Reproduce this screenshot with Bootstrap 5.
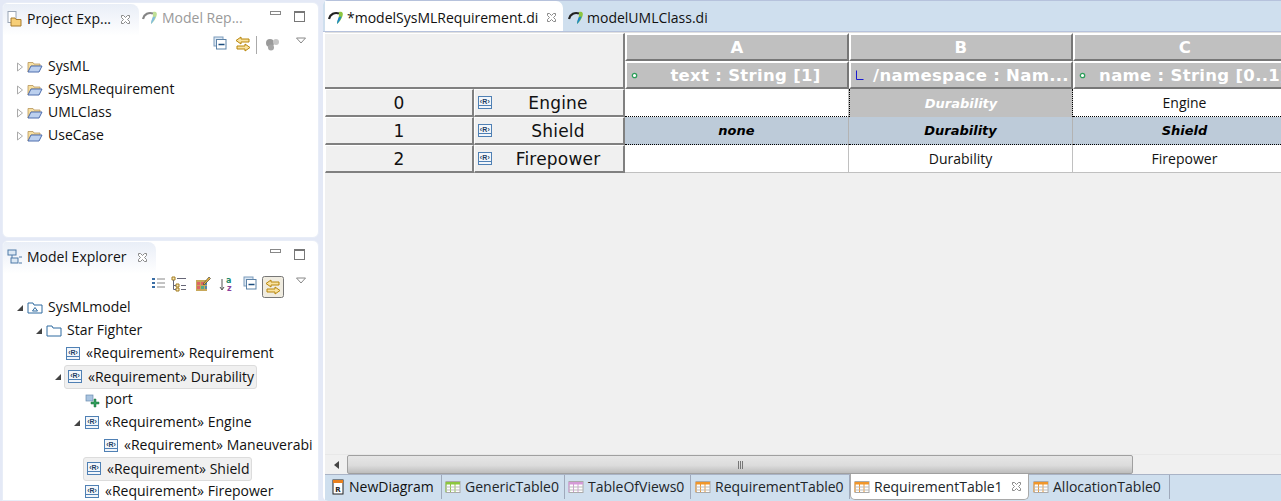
<!DOCTYPE html>
<html lang="en"><head><meta charset="utf-8"><title>Papyrus</title>
<link href="https://cdn.jsdelivr.net/npm/bootstrap@5.3.0/dist/css/bootstrap.min.css" rel="stylesheet">
<style>
html,body{height:501px;overflow:hidden}
body{background:#e4e9f6;font-family:"Open Sans","Noto Sans",sans-serif;font-size:14px;color:#111;line-height:1}
.app{height:501px;width:1281px}
.leftcol{width:323px;flex:none;padding:2px 4px 0 2px;gap:2px}
.panel{background:#fff;border-radius:6px 6px 0 0;overflow:hidden;border:1px solid #e8edf7}
.panel1{height:237px;border-radius:6px}
.panel2{height:262px}
.tabhead{height:33px;flex:none;padding-top:1px}
.vtab{height:32px;padding:0 8px 2px 4px;gap:4px;white-space:nowrap;background:linear-gradient(#e9eef7,#fff);border-radius:0 8px 0 0;color:#111}
.vtab1{width:136px}
.vtab2{width:153px}
.vtabgrey{color:#9a9a9a;padding:0 0 2px 3px;height:30px;gap:4px;white-space:nowrap}
.spacer{flex:1}
.winbtns{gap:13px;padding:7px 13px 0 0}
.min{width:11px;height:4px;border:1px solid #888;background:#fff}
.max{width:11px;height:11px;border:1px solid #777;border-top-width:2px;background:#fff}
.tools{flex:none;padding-right:10px}
.tools svg{display:block}
.toolsa{height:17px}
.toolsb{height:20px;padding-top:2px}
.sep{width:1px;height:18px;background:#aaa;margin:0 5px}
.ga{margin-left:8px}.gb{margin-left:6px}.gc{margin-left:8px}.gd{margin-left:5px}.ge{margin-left:15px}.gf{margin-left:11px}.gh{margin-left:3px}
.tree{padding-top:2px}
.trow{height:23px;white-space:nowrap}
.tw{width:14px;flex:none;display:flex;justify-content:center}
.lbl{padding:3px 2px 4px 3px}
.sel{border:1px solid #dcdcdc;border-radius:3px;background:#f0f0f0;padding:3px 2px 3px 1px;margin-left:-1px}
.sel .ico{margin-left:1px}
.sel .seltxt{padding-left:3px}
.ind1{padding-left:10px}.ind2{padding-left:29px}.ind3{padding-left:48px}.ind4{padding-left:67px}.ind5{padding-left:86px}
.ico{flex:none;display:block;margin-right:2px}
.tabsbar{height:32px;flex:none;background:#cfdfee;border-top:1px solid #b6c2dc;border-bottom:1px solid #b6c2dc;padding-left:2px}
.edtab{height:30px;gap:3px;padding:3px 6px 0 3px;white-space:nowrap}
.edtab.on{background:#fff;border-radius:0 7px 0 0;width:238px}
.edtab.off{padding-left:5px}
.rightcol{flex:1;min-width:0;overflow:hidden;background:#fff;border-radius:5px 0 0 5px}
.gridwrap{flex:1;background:#f0f0f0;overflow:hidden;margin-left:2px;border-top:1px solid #e0e0e0;min-height:0;display:flex;flex-direction:column}
.tblgrid{display:grid;grid-template-columns:149px 151px 224px 224px 224px;grid-template-rows:28px 28px 28px 28px 28px;width:972px;flex:none}
.corner{grid-column:1/3;grid-row:1/3;background:#f0f0f0;border-bottom:2px solid #808080;border-right:2px solid #808080;border-top:1px solid #fff}
.hd{background:#c0c0c0;color:#fff;font:700 16.5px "DejaVu Sans",sans-serif;border:1px solid #fff;border-top-width:2px;border-left-width:2px;border-right:2px solid #777;border-bottom:2px solid #777;overflow:hidden;white-space:nowrap;letter-spacing:.3px}
.attr{justify-content:flex-start;padding-left:4px}
.attr span{flex:1;text-align:center;padding-left:6px}
.rh{background:#f0f0f0;font:17px "DejaVu Sans",sans-serif;letter-spacing:.2px;color:#111;border-right:2px solid #808080;border-bottom:2px solid #808080;border-left:1px solid #fff;border-top:1px solid #fff}
.rn{padding-left:2px;justify-content:flex-start}
.rn span{flex:1;text-align:center}
.c{background:#fff;font:14px "Open Sans",sans-serif;border-right:1px solid #c0c0c0;border-bottom:1px solid #c0c0c0;color:#111}
.ds{border-bottom:1px dotted #000}
.hl{background:#bdcbd9;font:italic 700 13px "DejaVu Sans",sans-serif;color:#000;border-right:1px solid #b3b3b3}
.sl{background:#c0c0c0;color:#fff;font:italic 700 13px "DejaVu Sans",sans-serif;border-left:1px dotted #000;border-right:1px dotted #000}
.fill{flex:1;min-height:0}
.sbar{height:20px;flex:none;background:#f0f0f0;border-top:1px solid #e8e8e8}
.sbtn{width:22px;flex:none;justify-content:center}
.thumb{width:786px;height:19px;border:1px solid #a0a0a0;border-radius:2px;background:linear-gradient(#e6e6e6,#dcdcdc 55%,#bdbdbd);gap:1px}
.thumb i{display:block;width:1px;height:8px;background:#777}
.btabs{height:27px;flex:none;background:#cfdfee;border-top:1px solid #a9b3c6;margin-left:2px}
.btab{height:24px;white-space:nowrap;padding:0 0 0 3px;gap:4px;border-right:1px solid #9fa9bb;flex:none}
.btab.on{background:#fff;margin-top:-1px;height:26px;border:1px solid #a9a9a9;border-top:none;border-radius:0 0 5px 5px}
.wa{width:117px;padding-left:6px}.wb{width:123px}.wc{width:126px}.wd{width:159px;padding-left:4px}.we{width:179px}.wf{width:141px;padding-left:4px}
.grn{color:#8cc63f}.pur{color:#d49ad6}.org{color:#f0962a}
</style></head>
<body>
<svg width="0" height="0" class="d-none"><defs>
<symbol id="folder" viewBox="0 0 16 16"><path d="M1 3.500h5l1 1.500h6v2H4L1 13z" fill="#f7dfa0" stroke="#b8965a" stroke-width=".8"/><path d="M1 13l3-6h11l-3 6z" fill="#bcd0ee" stroke="#4e6eae"/></symbol>
<symbol id="req" viewBox="0 0 16 16"><rect x="1.500" y="1.500" width="13" height="12" fill="#f2f6fb" stroke="#4f80b4"/><path d="M1.500 10.500h13" stroke="#4f80b4"/><text x="8" y="8.500" font-family="Liberation Sans" font-size="7" font-weight="700" text-anchor="middle" fill="#1f3f66">‹R›</text></symbol>
<symbol id="close" viewBox="0 0 11 11"><path d="M1.500 1.500h2l2 2 2-2h2v2l-2 2 2 2v2h-2l-2-2-2 2h-2v-2l2-2-2-2z" fill="#fff" stroke="#8a8a8a"/></symbol>
<symbol id="tgl" viewBox="0 0 8 10"><path d="M1.500 1l5 4-5 4z" fill="#fff" stroke="#aaa"/></symbol>
<symbol id="open" viewBox="0 0 8 8"><path d="M7 1v6H1z" fill="#444"/></symbol>
<symbol id="pap" viewBox="0 0 16 16"><path d="M1 9C2 4 7 2 11 3.500" fill="none" stroke="#222" stroke-width="2.200"/><path d="M11 2c3.500-1 4.500 1 3.500 4-1 3-3 6-5.500 8 0-3 2.500-6 2-12z" fill="#8cc63f"/><path d="M9 14c0-3 1-5 2-7l2.500-.5C12.500 9.500 11 12.500 9 14z" fill="#1b87c9"/></symbol>
<symbol id="sync" viewBox="0 0 16 16"><path d="M6 1L1 4.500 6 8V6h8V3H6zM10 8l5 3.500L10 15v-2H2v-3h8z" fill="#f9e2a0" stroke="#b8860b"/></symbol>
<symbol id="coll" viewBox="0 0 14 14"><rect x="1" y="1" width="9" height="9" fill="#dbe7f3" stroke="#7c9cbc"/><rect x="3.500" y="3.500" width="9.500" height="9.500" fill="#fff" stroke="#5d83a8"/><path d="M5.500 8.500h6" stroke="#1c4d7e" stroke-width="1.500"/></symbol>
<symbol id="tbl" viewBox="0 0 16 16"><rect x="1" y="2.500" width="14" height="11" fill="#fff" stroke="#aaa"/><path d="M1 3h14v2.500H1z" fill="currentColor"/><path d="M1 3v10M5.500 3v10M10 3v10" stroke="currentColor"/><path d="M1 8h14M1 11h14" stroke="#bbb"/></symbol>
</defs></svg>
<div class="app d-flex">
 <div class="leftcol d-flex flex-column">
  <div class="panel panel1 d-flex flex-column">
   <div class="tabhead d-flex">
    <div class="vtab vtab1 d-flex align-items-center">
     <svg width="16" height="16" viewBox="0 0 16 16"><rect x="1" y="0.500" width="8" height="11" fill="#fff" stroke="#9aa5b5"/><path d="M4 7h4l1 1.500h5V15H4z" fill="#f7cf78" stroke="#a87c2e"/></svg>
     <span>Project Exp...</span><span class="spacer"></span><svg width="11" height="11"><use href="#close"/></svg>
    </div>
    <div class="vtabgrey d-flex align-items-center"><svg width="16" height="16" opacity=".55"><use href="#pap"/></svg><span>Model Rep...</span></div>
    <div class="spacer"></div>
    <div class="winbtns d-flex"><div class="min"></div><div class="max"></div></div>
   </div>
   <div class="tools toolsa d-flex justify-content-end align-items-start">
    <svg width="14" height="14"><use href="#coll"/></svg><svg class="ga" width="16" height="16"><use href="#sync"/></svg><div class="sep"></div>
    <svg class="gh" width="15" height="15" viewBox="0 0 15 15"><circle cx="5" cy="7" r="4" fill="#9a9a9a"/><circle cx="11" cy="6" r="3" fill="#c6c6c6"/><circle cx="6" cy="11.500" r="3" fill="#a5a5a5"/></svg>
    <svg class="ge" width="13" height="10" viewBox="0 0 13 10"><path d="M1.500 2h9l-4.500 5z" fill="#fff" stroke="#888"/></svg>
   </div>
   <div class="tree">
    <div class="trow d-flex align-items-center ind1"><span class="tw"><svg width="8" height="10"><use href="#tgl"/></svg></span><svg class="ico" width="16" height="16"><use href="#folder"/></svg><span class="lbl">SysML</span></div>
    <div class="trow d-flex align-items-center ind1"><span class="tw"><svg width="8" height="10"><use href="#tgl"/></svg></span><svg class="ico" width="16" height="16"><use href="#folder"/></svg><span class="lbl">SysMLRequirement</span></div>
    <div class="trow d-flex align-items-center ind1"><span class="tw"><svg width="8" height="10"><use href="#tgl"/></svg></span><svg class="ico" width="16" height="16"><use href="#folder"/></svg><span class="lbl">UMLClass</span></div>
    <div class="trow d-flex align-items-center ind1"><span class="tw"><svg width="8" height="10"><use href="#tgl"/></svg></span><svg class="ico" width="16" height="16"><use href="#folder"/></svg><span class="lbl">UseCase</span></div>
   </div>
  </div>
  <div class="panel panel2 d-flex flex-column">
   <div class="tabhead d-flex">
    <div class="vtab vtab2 d-flex align-items-center">
     <svg width="16" height="16" viewBox="0 0 16 16"><rect x="1" y="1" width="8" height="5" fill="#dce8f4" stroke="#4f7ba8"/><rect x="4" y="9" width="7" height="5" fill="#dce8f4" stroke="#4f7ba8"/><path d="M5 6v3M12 8h3M12 14h3" stroke="#4f7ba8"/></svg>
     <span>Model Explorer</span><span class="spacer"></span><svg width="11" height="11"><use href="#close"/></svg>
    </div>
    <div class="spacer"></div>
    <div class="winbtns d-flex"><div class="min"></div><div class="max"></div></div>
   </div>
   <div class="tools toolsb d-flex justify-content-end align-items-start">
    <svg width="14" height="14" viewBox="0 0 14 14"><path d="M1 2h3v2H1zM1 6h3v2H1zM1 10h3v2H1z" fill="#3a6ea5"/><path d="M6 3h8M6 7h8M6 11h8" stroke="#888"/></svg>
    <svg class="gb" width="16" height="16" viewBox="0 0 16 16"><path d="M1 1h3v3H1zM5 8h3v3H5zM5 12h3v3H5z" fill="#fbe9b5" stroke="#a07a20"/><path d="M2.500 4v9.500H5M2.500 9.500H5M6 2.500h9M10 9.500h5M10 13.500h5" fill="none" stroke="#667"/></svg>
    <svg class="gc" width="16" height="16" viewBox="0 0 16 16"><path d="M1 4h11v11H1z" fill="#c8a85a"/><path d="M2 6h3v3H2zM6 6h3v3H6zM2 10h3v3H2z" fill="#d66"/><path d="M6 10h3v3H6z" fill="#5a8"/><path d="M10 6h2v3h-2zM10 10h2v3h-2z" fill="#58a"/><path d="M8 8l6-7 1.500 1.500L9 9z" fill="#e3b23c" stroke="#333" stroke-width=".6"/></svg>
    <svg class="gc" width="16" height="16" viewBox="0 0 16 16"><path d="M3 3v10M1 11l2 3 2-3" fill="none" stroke="#555"/><text x="7" y="7" font-family="DejaVu Sans" font-size="8" font-weight="700" fill="#1c8a6a">a</text><text x="8" y="15" font-family="DejaVu Sans" font-size="8" font-weight="700" fill="#8a3f9e">z</text></svg>
    <svg class="ga" width="14" height="14"><use href="#coll"/></svg>
    <svg class="gd" width="22" height="22" viewBox="0 0 22 22"><rect x=".5" y=".5" width="21" height="21" rx="2" fill="#f0ece0" stroke="#777"/><use href="#sync" x="3" y="3" width="16" height="16"/></svg>
    <svg class="gf" width="13" height="10" viewBox="0 0 13 10"><path d="M1.500 2h9l-4.500 5z" fill="#fff" stroke="#888"/></svg>
   </div>
   <div class="tree">
    <div class="trow d-flex align-items-center ind1"><span class="tw"><svg width="8" height="8"><use href="#open"/></svg></span><svg class="ico" width="16" height="16" viewBox="0 0 16 16"><path d="M1 3h5l1 2h8v8H1z" fill="#fff" stroke="#2f6ba0"/><path d="M5.500 11L8 7.500l2.500 3.500z" fill="none" stroke="#2f6ba0"/></svg><span class="lbl">SysMLmodel</span></div>
    <div class="trow d-flex align-items-center ind2"><span class="tw"><svg width="8" height="8"><use href="#open"/></svg></span><svg class="ico" width="16" height="16" viewBox="0 0 16 16"><path d="M1 3h5l1 2h8v8H1z" fill="#fff" stroke="#2f6ba0"/></svg><span class="lbl">Star Fighter</span></div>
    <div class="trow d-flex align-items-center ind3"><span class="tw"></span><svg class="ico" width="16" height="16"><use href="#req"/></svg><span class="lbl">«Requirement» Requirement</span></div>
    <div class="trow d-flex align-items-center ind3"><span class="tw"><svg width="8" height="8"><use href="#open"/></svg></span><span class="d-flex align-items-center sel"><svg class="ico" width="16" height="16"><use href="#req"/></svg><span class="seltxt">«Requirement» Durability</span></span></div>
    <div class="trow d-flex align-items-center ind4"><span class="tw"></span><svg class="ico" width="16" height="16" viewBox="0 0 16 16"><rect x="2" y="3" width="7" height="6" fill="#a9c4e0" stroke="#6c8db0" stroke-width=".7"/><path d="M10 7h2v3h3v2h-3v3h-2v-3H7v-2h3z" fill="#2f9e5b" stroke="#1e6e3e" stroke-width=".5"/></svg><span class="lbl">port</span></div>
    <div class="trow d-flex align-items-center ind4"><span class="tw"><svg width="8" height="8"><use href="#open"/></svg></span><svg class="ico" width="16" height="16"><use href="#req"/></svg><span class="lbl">«Requirement» Engine</span></div>
    <div class="trow d-flex align-items-center ind5"><span class="tw"></span><svg class="ico" width="16" height="16"><use href="#req"/></svg><span class="lbl">«Requirement» Maneuverabi</span></div>
    <div class="trow d-flex align-items-center ind4"><span class="tw"></span><span class="d-flex align-items-center sel"><svg class="ico" width="16" height="16"><use href="#req"/></svg><span class="seltxt">«Requirement» Shield</span></span></div>
    <div class="trow d-flex align-items-center ind4"><span class="tw"></span><svg class="ico" width="16" height="16"><use href="#req"/></svg><span class="lbl">«Requirement» Firepower</span></div>
   </div>
  </div>
 </div>
 <div class="rightcol d-flex flex-column">
  <div class="tabsbar d-flex">
   <div class="edtab on d-flex align-items-center"><svg width="16" height="16"><use href="#pap"/></svg><span>*modelSysMLRequirement.di</span><span class="spacer"></span><svg width="11" height="11"><use href="#close"/></svg></div>
   <div class="edtab off d-flex align-items-center"><svg width="16" height="16"><use href="#pap"/></svg><span>modelUMLClass.di</span></div>
  </div>
  <div class="gridwrap">
   <div class="tblgrid">
    <div class="corner"></div>
    <div class="hd d-flex align-items-center justify-content-center">A</div>
    <div class="hd d-flex align-items-center justify-content-center">B</div>
    <div class="hd d-flex align-items-center justify-content-center">C</div>
    <div class="hd attr d-flex align-items-center"><svg width="7" height="7" viewBox="0 0 7 7"><circle cx="3.500" cy="3.500" r="2.200" fill="#fff" stroke="#2e9e5b" stroke-width="1.300"/></svg><span>text : String [1]</span></div>
    <div class="hd attr d-flex align-items-center"><svg width="10" height="11" viewBox="0 0 10 11"><path d="M1.500 .5v9h7" fill="none" stroke="#1a1ad0"/></svg><span>/namespace : Nam...</span></div>
    <div class="hd attr d-flex align-items-center"><svg width="7" height="7" viewBox="0 0 7 7"><circle cx="3.500" cy="3.500" r="2.200" fill="#fff" stroke="#2e9e5b" stroke-width="1.300"/></svg><span>name : String [0..1]</span></div>

    <div class="rh d-flex align-items-center justify-content-center">0</div>
    <div class="rh rn d-flex align-items-center"><svg width="16" height="16"><use href="#req"/></svg><span>Engine</span></div>
    <div class="c ds d-flex align-items-center justify-content-center"></div>
    <div class="sl d-flex align-items-center justify-content-center">Durability</div>
    <div class="c ds d-flex align-items-center justify-content-center">Engine</div>

    <div class="rh d-flex align-items-center justify-content-center">1</div>
    <div class="rh rn d-flex align-items-center"><svg width="16" height="16"><use href="#req"/></svg><span>Shield</span></div>
    <div class="c hl ds d-flex align-items-center justify-content-center">none</div>
    <div class="c hl ds d-flex align-items-center justify-content-center">Durability</div>
    <div class="c hl ds d-flex align-items-center justify-content-center">Shield</div>

    <div class="rh d-flex align-items-center justify-content-center">2</div>
    <div class="rh rn d-flex align-items-center"><svg width="16" height="16"><use href="#req"/></svg><span>Firepower</span></div>
    <div class="c d-flex align-items-center justify-content-center"></div>
    <div class="c d-flex align-items-center justify-content-center">Durability</div>
    <div class="c d-flex align-items-center justify-content-center">Firepower</div>
   </div>
   <div class="fill"></div>
   <div class="sbar d-flex align-items-center">
    <div class="sbtn d-flex"><svg width="7" height="10" viewBox="0 0 7 10"><path d="M6 1v8L1 5z" fill="#444"/></svg></div>
    <div class="thumb d-flex align-items-center justify-content-center"><i></i><i></i><i></i></div>
   </div>
  </div>
  <div class="btabs d-flex">
   <div class="btab wa d-flex align-items-center"><svg width="14" height="16" viewBox="0 0 14 16"><rect x="2" y="1" width="10" height="14" fill="#fff" stroke="#222"/><path d="M2 1h10v3H2z" fill="#e8801e"/><text x="7" y="13" font-family="DejaVu Sans" font-size="7" font-weight="700" text-anchor="middle" fill="#222">R</text></svg><span>NewDiagram</span></div>
   <div class="btab wb grn d-flex align-items-center"><svg width="16" height="16"><use href="#tbl"/></svg><span class="text-dark">GenericTable0</span></div>
   <div class="btab wc pur d-flex align-items-center"><svg width="16" height="16"><use href="#tbl"/></svg><span class="text-dark">TableOfViews0</span></div>
   <div class="btab wd org d-flex align-items-center"><svg width="16" height="16"><use href="#tbl"/></svg><span class="text-dark">RequirementTable0</span></div>
   <div class="btab we on org d-flex align-items-center"><svg width="16" height="16"><use href="#tbl"/></svg><span class="text-dark">RequirementTable1</span><svg class="ms-1" width="11" height="11"><use href="#close"/></svg></div>
   <div class="btab wf org d-flex align-items-center"><svg width="16" height="16"><use href="#tbl"/></svg><span class="text-dark">AllocationTable0</span></div>
  </div>
 </div>
</div>
</body></html>
